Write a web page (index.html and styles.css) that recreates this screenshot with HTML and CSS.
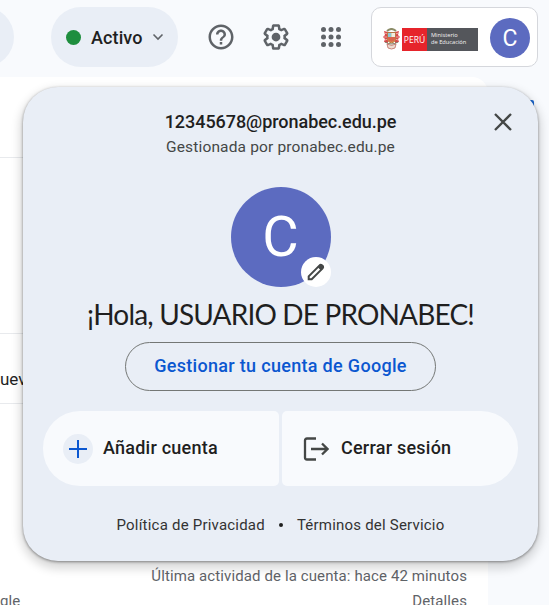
FILE: index.html
```
<!DOCTYPE html>
<html lang="es">
<head>
<meta charset="utf-8">
<title>Cuenta de Google</title>
<link rel="stylesheet" href="styles.css">
</head>
<body>
<header class="topbar">
  <div class="search"></div>
  <div class="status"><span class="dot"></span><span class="status-text">Activo</span>
    <svg class="chevron" width="12" height="8" viewBox="0 0 12 8"><path d="M1.500 1.500 6 6l4.500-4.500" fill="none" stroke="#5f6368" stroke-width="1.600"/></svg>
  </div>
  <nav class="tools">
    <svg width="30" height="30" viewBox="0 0 24 24" fill="#5f6368"><path d="M11 18h2v-2h-2v2zm1-16C6.480 2 2 6.480 2 12s4.480 10 10 10 10-4.480 10-10S17.520 2 12 2zm0 18c-4.410 0-8-3.590-8-8s3.590-8 8-8 8 3.590 8 8-3.590 8-8 8zm0-14c-2.210 0-4 1.790-4 4h2c0-1.100.9-2 2-2s2 .9 2 2c0 2-3 1.750-3 5h2c0-2.250 3-2.500 3-5 0-2.210-1.790-4-4-4z"/></svg>
    <svg width="30" height="30" viewBox="0 0 24 24" fill="#5f6368"><path d="M13.850 22.250h-3.700c-.74 0-1.360-.54-1.450-1.270l-.27-1.890c-.27-.14-.53-.29-.79-.46l-1.800.72c-.7.260-1.470-.03-1.810-.65L2.200 15.530c-.35-.66-.2-1.440.36-1.880l1.530-1.190c-.01-.15-.02-.3-.02-.46 0-.15.010-.31.020-.46l-1.520-1.190c-.59-.45-.74-1.260-.37-1.880l1.850-3.190c.34-.62 1.110-.9 1.790-.63l1.810.73c.26-.17.52-.32.78-.46l.27-1.910c.09-.7.710-1.250 1.440-1.250h3.700c.74 0 1.360.54 1.450 1.270l.27 1.890c.27.140.53.290.79.460l1.800-.72c.71-.26 1.480.03 1.820.65l1.840 3.180c.36.660.2 1.440-.36 1.880l-1.520 1.190c.01.150.02.3.020.460s-.01.310-.02.460l1.520 1.190c.56.450.72 1.230.37 1.860l-1.860 3.220c-.34.620-1.110.9-1.800.63l-1.800-.72c-.26.170-.52.320-.78.460l-.27 1.910c-.1.680-.72 1.220-1.460 1.220zm-3.230-2h2.760l.37-2.550.53-.22c.44-.18.880-.44 1.340-.78l.45-.34 2.380.96 1.380-2.400-2.030-1.580.07-.56c.03-.26.060-.51.060-.78s-.03-.53-.06-.78l-.07-.56 2.030-1.580-1.390-2.400-2.390.96-.45-.35c-.42-.32-.87-.58-1.330-.77l-.52-.22-.37-2.550h-2.760l-.37 2.550-.53.210c-.44.190-.88.440-1.340.79l-.45.330-2.380-.95-1.390 2.390 2.030 1.580-.07.56a7 7 0 0 0-.06.790c0 .26.020.53.060.78l.07.560-2.030 1.580 1.380 2.400 2.390-.96.45.350c.43.330.86.580 1.330.77l.53.220z"/><circle cx="12" cy="12" r="3.500"/></svg>
    <svg width="30" height="30" viewBox="0 0 24 24" fill="#5f6368"><circle cx="6" cy="6" r="2"/><circle cx="12" cy="6" r="2"/><circle cx="18" cy="6" r="2"/><circle cx="6" cy="12" r="2"/><circle cx="12" cy="12" r="2"/><circle cx="18" cy="12" r="2"/><circle cx="6" cy="18" r="2"/><circle cx="12" cy="18" r="2"/><circle cx="18" cy="18" r="2"/></svg>
  </nav>
  <div class="org">
    <svg class="crest" width="17" height="22" viewBox="0 0 17 22">
      <path d="M4 3Q8.500-1 13 3" fill="none" stroke="#8b8c68" stroke-width="2"/>
      <path d="M1 3l4 1v11l-4-1 1-3-2-2 2-2zM16 3l-4 1v11l4-1-1-3 2-2-2-2z" fill="#d9474a"/>
      <path d="M1 5l4 1M1 9h4M2 12l3-1M16 5l-4 1M16 9h-4M15 12l-3-1" stroke="#efc0b4" stroke-width=".8"/>
      <path d="M4.500 4.500h8v6.500q0 3-4 4-4-1-4-4z" fill="#e2b84a" stroke="#b97848"/>
      <path d="M5 5h3.500v4H5z" fill="#8dc6d5"/><path d="M8.500 5H12v4H8.500z" fill="#f1eee0"/><path d="M5 9h7v2q0 2-3.500 3Q5 13 5 11z" fill="#d9654d"/>
      <path d="M2 14q6.500 4 13 0" fill="none" stroke="#77765e"/><path d="M4 16q4.500 3 9 0l-1 4q-3.500 2-7 0z" fill="#ecdcd1" stroke="#b65a4d" stroke-width=".7"/>
    </svg>
    <span class="peru">PERÚ</span>
    <span class="ministry"><span>Ministerio</span><span>de Educación</span></span>
    <span class="avatar small">C</span>
  </div>
</header>
<main class="page">
  <div class="row first"></div><div class="row second"></div>
  <div class="row third"><span>uev</span></div>
  <footer class="activity">
    <div class="activity-line">Última actividad de la cuenta: hace 42 minutos</div>
    <div class="details"><span class="google-end">gle</span><span class="details-link">Detalles</span></div>
  </footer>
</main>
<span class="side-icon"></span>
<section class="account">
  <svg class="close" width="18" height="18" viewBox="0 0 18 18"><path d="m1 1 16 16m0-16-16 16" stroke="#444746" stroke-width="2.300"/></svg>
  <div class="email"><span>12345678@pronabec.edu.pe</span></div>
  <div class="managed"><span>Gestionada por pronabec.edu.pe</span></div>
  <div class="portrait"><span class="avatar large">C</span><span class="edit">
    <svg width="20" height="20" viewBox="0 0 20 20"><path d="M2.700 17.300v-3L13.600 3.400a1.500 1.500 0 0 1 2.100 0l.9.900a1.500 1.500 0 0 1 0 2.100L5.700 17.300z" fill="none" stroke="#444746" stroke-width="2"/><path d="m11.500 5 2.500-2.500c.7-.7 1.700-.7 2.400 0l1.100 1.100c.7.700.7 1.700 0 2.400L15 8.500z" fill="#444746"/></svg>
  </span></div>
  <h1 class="greeting"><span>¡Hola, USUARIO DE PRONABEC!</span></h1>
  <div class="manage"><span>Gestionar tu cuenta de Google</span></div>
  <div class="actions">
    <div class="action add"><span class="plus"><svg width="18" height="18" viewBox="0 0 18 18"><path d="M9 0v18M0 9h18" stroke="#0b57d0" stroke-width="2"/></svg></span><span class="add-text">Añadir cuenta</span></div>
    <div class="action logout"><svg width="26" height="24" viewBox="0 0 26 24"><path d="M13 1.500H4Q2 1.500 2 3.500v17q0 2 2 2h9M8 12h17M19 6.500l5.500 5.500-5.500 5.500" fill="none" stroke="#444746" stroke-width="2.300"/></svg><span class="logout-text">Cerrar sesión</span></div>
  </div>
  <div class="legal"><span class="privacy">Política de Privacidad</span><span class="bullet"></span><span class="terms">Términos del Servicio</span></div>
</section>
</body>
</html>
```
FILE: styles.css
```
* { box-sizing: border-box; }
body { margin: 0; width: 549px; height: 605px; overflow: hidden; position: relative; background: #f8fafd; color: #1f1f1f; font-family: Roboto, "Liberation Sans", sans-serif; white-space: nowrap; }
.topbar { height: 77px; display: flex; align-items: flex-start; }
.search { width: 60px; height: 60px; flex: none; margin: 7px 0 0 -46px; background: #e9eef6; border-radius: 0 30px 30px 0; }
.status { width: 127px; height: 60px; flex: none; margin: 7px 0 0 37px; padding-left: 15px; display: flex; align-items: center; background: #e9eef6; border-radius: 30px; }
.dot { width: 15px; height: 15px; border-radius: 50%; background: #1e8e3e; }
.status-text { width: 52px; margin-left: 10px; font-size: 18px; font-weight: 500; letter-spacing: .1px; }
.chevron { margin-left: 9px; }
.tools { margin: 22px 0 0 28px; display: flex; gap: 25px; }
.org { width: 167px; height: 60px; flex: none; margin: 7px 0 0 25px; padding: 2px 0 0 11px; display: flex; align-items: center; background: #fff; border: 1px solid #d5d7dc; border-radius: 10px; }
.crest { margin: 2px 2px 0 0; }
.peru { width: 25px; height: 23px; margin-top: 3px; background: #e6242b; color: #fff; font: 8.500px/23px "Open Sans", sans-serif; text-align: center; }
.ministry { width: 51px; height: 23px; margin-top: 3px; padding: 4px 0 0 4px; display: flex; flex-direction: column; background: #54565b; color: #f4f4f4; font: 5.700px/7px "Open Sans", sans-serif; }
.ministry span { height: 7px; }
.avatar { display: flex; align-items: center; justify-content: center; border-radius: 50%; background: #5c6bc0; color: #fff; }
.small { width: 40px; height: 40px; margin-left: 12px; font-size: 23px; }
.page { width: 488px; height: 528px; background: #fff; border-radius: 0 16px 0 0; overflow: hidden; }
.row { border-bottom: 1px solid #e8eaed; }
.first { height: 81px; }
.second { height: 176px; }
.third { height: 70px; padding-top: 35px; font-size: 17px; line-height: 20px; }
.activity { padding-top: 162px; color: #5f6368; font-size: 15px; line-height: 20px; }
.activity-line { padding-right: 21px; text-align: right; letter-spacing: .11px; }
.details { margin-top: 5px; padding-right: 21px; display: flex; justify-content: space-between; letter-spacing: .12px; }
.side-icon { position: absolute; left: 522px; top: 100px; width: 12px; height: 14px; border-radius: 2px; background: #1967d2; }
.account { position: absolute; left: 23px; top: 87px; width: 515px; height: 474px; padding-top: 23px; border-radius: 35px; background: #e9eef6; box-shadow: 0 5px 10px 3px rgba(0,0,0,.15), 0 1px 3px rgba(0,0,0,.42); display: flex; flex-direction: column; align-items: center; }
.close { position: absolute; right: 26px; top: 26px; }
.email { height: 24px; font-size: 18px; font-weight: 500; line-height: 24px; letter-spacing: -.05px; }
.managed { height: 20px; margin-top: 3px; color: #444746; font-size: 15.500px; line-height: 20px; letter-spacing: .15px; }
.portrait { position: relative; width: 100px; height: 100px; margin-top: 30px; }
.large { width: 100px; height: 100px; font-size: 56px; }
.edit { position: absolute; left: 70px; top: 70px; width: 30px; height: 30px; display: flex; align-items: center; justify-content: center; border-radius: 50%; background: #fff; }
.greeting { height: 36px; margin: 9px 0 0; font: 400 28px/36px Lato, sans-serif; letter-spacing: -.83px; }
.manage { width: 311px; height: 49px; margin-top: 10px; border: 1px solid #747775; border-radius: 25px; color: #0b57d0; font-size: 18px; font-weight: 500; line-height: 46px; text-align: center; letter-spacing: .31px; }
.actions { display: flex; gap: 3px; margin-top: 20px; }
.action { height: 75px; display: flex; align-items: center; background: #f8fafd; font-size: 18px; font-weight: 500; letter-spacing: .23px; }
.add { width: 236px; padding-left: 20px; border-radius: 37px 5px 5px 37px; }
.logout { width: 236px; padding-left: 21px; border-radius: 5px 37px 37px 5px; }
.add-text, .logout-text { margin-bottom: 2px; }
.plus { width: 30px; height: 30px; margin-right: 10px; display: flex; align-items: center; justify-content: center; border-radius: 50%; background: #e9eef6; }
.logout-text { margin-left: 12px; }
.legal { width: 328px; height: 20px; margin-top: 29px; display: flex; align-items: center; justify-content: space-between; color: #333; font-size: 15px; line-height: 20px; letter-spacing: .21px; }
.bullet { width: 4px; height: 4px; border-radius: 50%; background: #1f1f1f; }
```
